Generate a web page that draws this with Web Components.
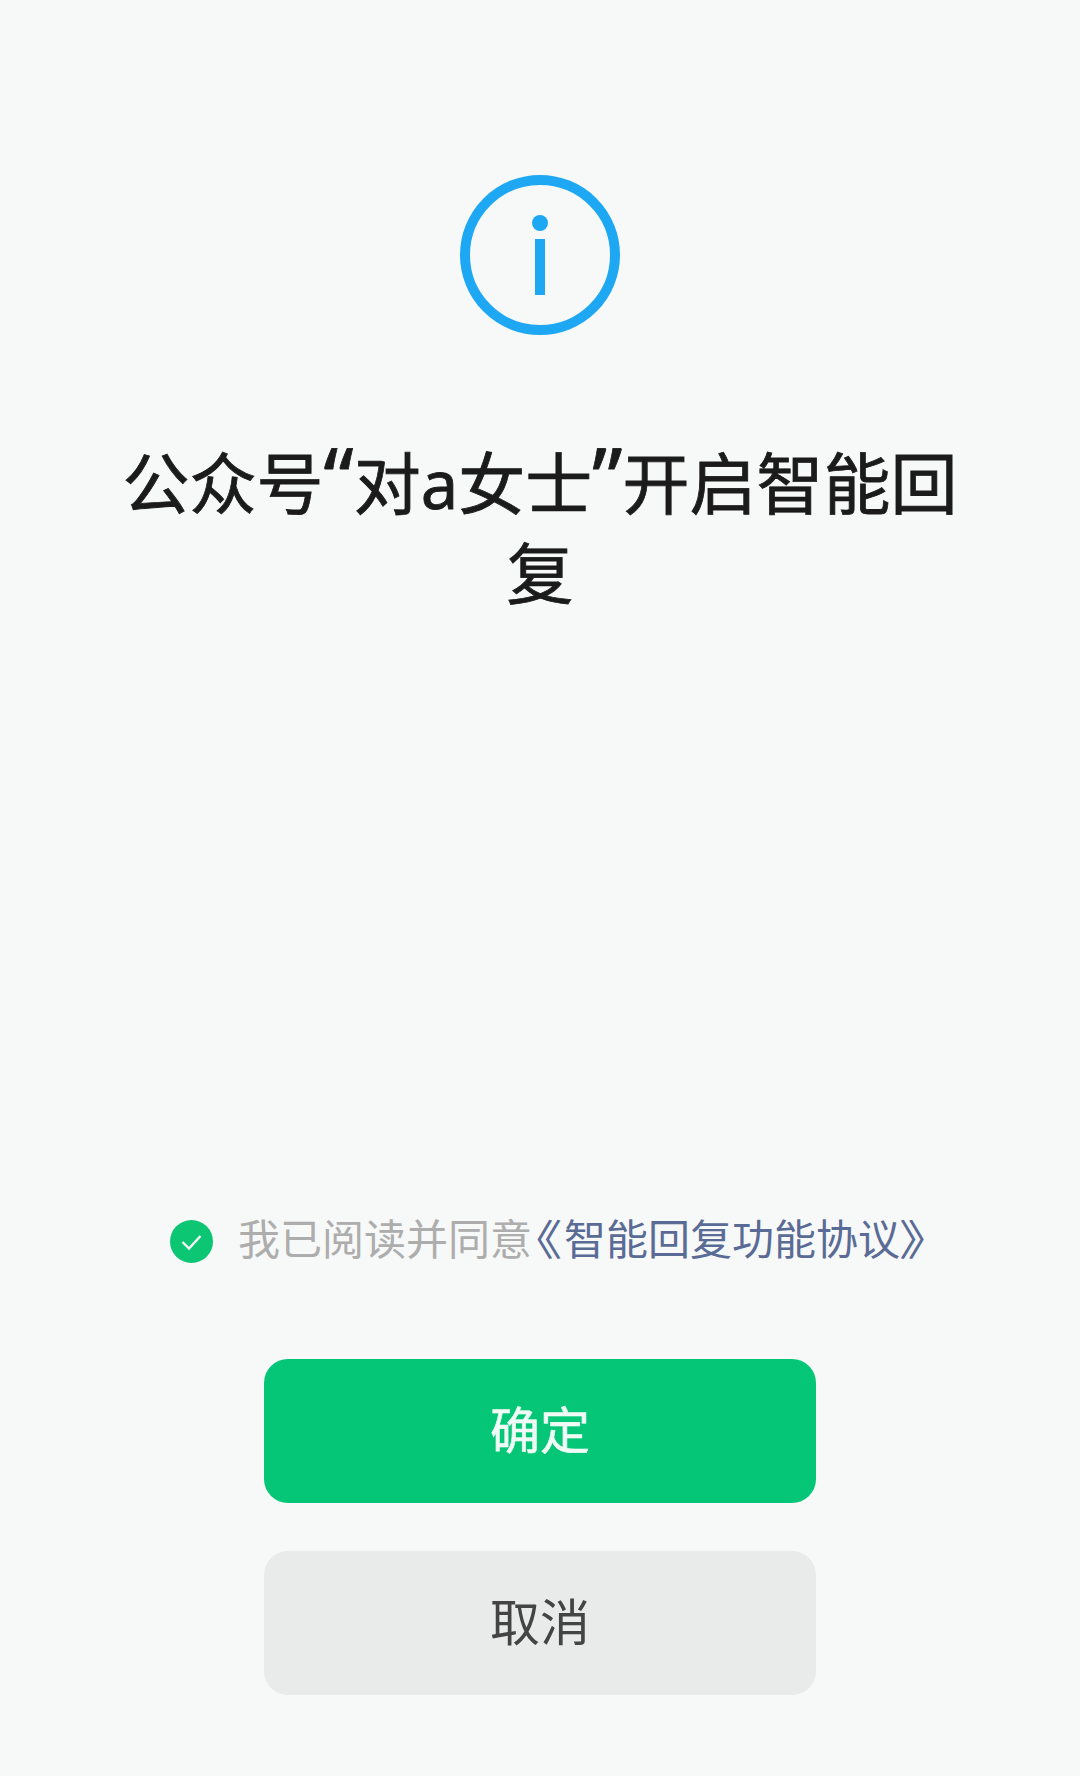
<!DOCTYPE html>
<html lang="zh-CN">
<head>
<meta charset="utf-8">
<title>开启智能回复</title>
<style>
    html, body { margin: 0; height: 100%; background: #f7f8f8; }
    body { font-family: "Noto Sans CJK SC", "Noto Sans", sans-serif; }
</style>
</head>
<body>
<confirm-page>
    <info-icon slot="icon"></info-icon>
    <page-title slot="title">公众号<span>“</span>对a女士<span>”</span>开启智能回<br>复</page-title>
    <agree-row slot="agree" link="智能回复功能协议">我已阅读并同意</agree-row>
    <action-button slot="actions" kind="primary">确定</action-button>
    <action-button slot="actions">取消</action-button>
</confirm-page>
<script>
class ConfirmPage extends HTMLElement {
    constructor() {
        super()
        const shadowRoot = this.attachShadow({ mode: 'open' })
        shadowRoot.innerHTML = `
            <style>
                :host {
                    display: flex;
                    flex-direction: column;
                    align-items: center;
                    box-sizing: border-box;
                    height: 1776px;
                    padding-top: 175px;
                    background: #f7f8f8;
                }
                .top { margin-bottom: 103px; }
                .agree {
                    align-self: flex-start;
                    margin: auto 0 94px 170px;
                }
                .actions {
                    display: flex;
                    flex-direction: column;
                    gap: 48px;
                    margin-bottom: 81px;
                }
            </style>
            <div class="top"><slot name="icon"></slot></div>
            <slot name="title"></slot>
            <div class="agree"><slot name="agree"></slot></div>
            <div class="actions"><slot name="actions"></slot></div>
        `
    }
}

class InfoIcon extends HTMLElement {
    constructor() {
        super()
        const shadowRoot = this.attachShadow({ mode: 'open' })
        shadowRoot.innerHTML = `
            <style>
                :host { display: block; width: 160px; height: 160px; }
                svg { display: block; }
            </style>
            <svg width="160" height="160" viewBox="0 0 160 160" fill="none">
                <circle cx="80" cy="80" r="75" stroke="#1ea8f4" stroke-width="10"/>
                <circle cx="80" cy="48" r="8" fill="#1ea8f4"/>
                <rect x="75" y="64" width="10" height="56" fill="#1ea8f4"/>
            </svg>
        `
    }
}

class PageTitle extends HTMLElement {
    constructor() {
        super()
        const shadowRoot = this.attachShadow({ mode: 'open' })
        shadowRoot.innerHTML = `
            <style>
                :host {
                    display: block;
                    width: 860px;
                    font-family: "Noto Sans", "Noto Sans CJK SC", sans-serif;
                    font-size: 67px;
                    line-height: 90px;
                    font-weight: 400;
                    -webkit-text-stroke: 0.8px #1b1b1b;
                    color: #1b1b1b;
                    text-align: center;
                }
                /* the quotes are wider than what Noto gives at this size */
                ::slotted(span) {
                    font-size: 84px;
                    line-height: 0;
                }
            </style>
            <slot></slot>
        `
    }
}

class AgreeRow extends HTMLElement {
    constructor() {
        super()
        const shadowRoot = this.attachShadow({ mode: 'open' })
        shadowRoot.innerHTML = `
            <style>
                :host {
                    display: flex;
                    align-items: center;
                    gap: 25px;
                    font-size: 42px;
                    line-height: 56px;
                    color: #adadad;
                    white-space: nowrap;
                }
                svg { display: block; flex: none; margin-top: 8px; }
                a { color: #5a6c96; text-decoration: none; }
                i {
                    display: inline-block;
                    font-style: normal;
                    font-feature-settings: "palt";
                    transform-origin: 0 50%;
                }
                .open { width: 29px; margin-left: 3px; transform: scaleX(1.25); }
                .close { transform: scaleX(1.25); }
            </style>
            <svg width="43" height="43" viewBox="0 0 43 43">
                <circle cx="21.5" cy="21.5" r="21.5" fill="#0cc674"/>
                <path d="M12.5 22l6.5 6.5 11.5-12.5" fill="none" stroke="#f4fbf7" stroke-width="2.4"/>
            </svg>
            <span><slot></slot><a></a></span>
        `
        this.render = this.render.bind(this)
    }
    connectedCallback() {
        this.render()
    }
    render() {
        const link = this.shadowRoot.querySelector('a')
        link.innerHTML = `<i class="open">《</i>${this.getAttribute('link')}<i class="close">》</i>`
    }
}

class ActionButton extends HTMLElement {
    constructor() {
        super()
        const shadowRoot = this.attachShadow({ mode: 'open' })
        shadowRoot.innerHTML = `
            <style>
                :host {
                    display: flex;
                    align-items: center;
                    justify-content: center;
                    box-sizing: border-box;
                    width: 552px;
                    height: 144px;
                    padding-bottom: 9px;
                    border-radius: 24px;
                    font-size: 50px;
                    background: #e9eaea;
                    color: #444;
                }
                :host([kind="primary"]) {
                    background: #05c677;
                    color: #f0fbf6;
                    -webkit-text-stroke: 0.6px #f0fbf6;
                }
            </style>
            <slot></slot>
        `
    }
}

customElements.define('confirm-page', ConfirmPage)
customElements.define('info-icon', InfoIcon)
customElements.define('page-title', PageTitle)
customElements.define('agree-row', AgreeRow)
customElements.define('action-button', ActionButton)
</script>
</body>
</html>
